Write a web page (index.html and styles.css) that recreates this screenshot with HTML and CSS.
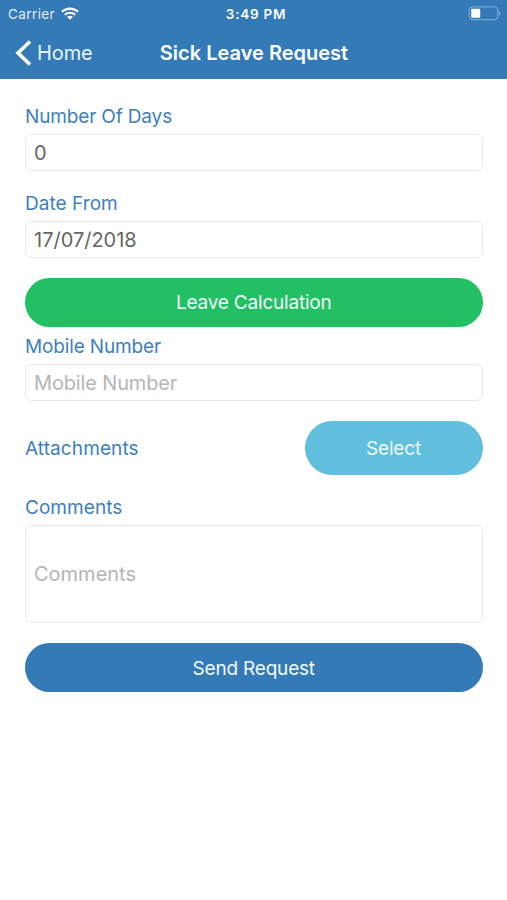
FILE: index.html
```html
<!DOCTYPE html>
<html lang="en">
<head>
<meta charset="utf-8">
<title>Sick Leave Request</title>
<link rel="stylesheet" href="styles.css">
</head>
<body>
<header class="header">
  <div class="status">
    <div class="carrier"><span>Carrier</span>
      <svg class="wifi" width="18" height="13" viewBox="0 0 18 13" fill="none" stroke="#fff" stroke-width="2.1"><path d="M1 4.8C5.5.5 12.5.5 17 4.8"/><path d="M3.8 7.7c3-2.7 7.4-2.7 10.4 0"/><path d="M6.1 9.8c1.7-1.5 4.1-1.5 5.8 0L9 12.7z" fill="#fff" stroke="none"/></svg>
    </div>
    <span class="time">3:49 PM</span>
    <svg class="battery" width="33" height="15" viewBox="0 0 33 15"><rect x="1.2" y=".9" width="28.6" height="12.8" rx="3.2" fill="none" stroke="#85b2d9" stroke-width="1"/><rect x="3.2" y="2.8" width="9" height="9" rx=".8" fill="#fff"/><path d="M31 5.2c1.8.7 1.8 3.5 0 4.2z" fill="#85b2d9"/></svg>
  </div>
  <nav class="nav">
    <a class="back"><svg width="17" height="26" viewBox="0 0 17 26" fill="none" stroke="#fff" stroke-width="3.6"><path d="M15 1.5 3 13l12 11.5"/></svg><span>Home</span></a>
    <h1 class="title">Sick Leave Request</h1>
    <span></span>
  </nav>
</header>
<main class="form">
  <label class="label days">Number Of Days</label>
  <div class="field value">0</div>
  <label class="label from">Date From</label>
  <div class="field value">17/07/2018</div>
  <button class="button calculate">Leave Calculation</button>
  <label class="label mobile">Mobile Number</label>
  <div class="field hint mobile-field">Mobile Number</div>
  <div class="attachments"><span class="label attach">Attachments</span><button class="button select">Select</button></div>
  <label class="label comments">Comments</label>
  <div class="field hint area">Comments</div>
  <button class="button send">Send Request</button>
</main>
</body>
</html>
```
FILE: styles.css
```css
* { box-sizing: border-box; }
body {
  margin: 0;
  min-height: 900px;
  background: #fff;
  font-family: Inter, "Liberation Sans", sans-serif;
  font-size: 19px;
}
.header { height: 79px; background: #337ab7; color: #fff; }
.status {
  display: grid;
  grid-template-columns: 1fr auto 1fr;
  align-items: center;
  height: 27px;
  padding: 0 6px 0 8px;
  font-size: 13.5px;
}
.carrier { display: flex; align-items: center; gap: 6px; color: #e3f0fb; letter-spacing: .4px; }
.time { font-weight: 600; letter-spacing: .75px; margin-left: 3px; }
.battery { justify-self: end; }
.nav {
  display: grid;
  grid-template-columns: 1fr auto 1fr;
  align-items: center;
  height: 51px;
}
.back { display: flex; align-items: center; gap: 5px; padding-left: 15px; font-size: 20px; letter-spacing: -.1px; color: #eaf5ff; }
.title { margin: 0 0 0 1px; font-size: 20px; font-weight: 600; letter-spacing: 0; }
.form { display: flex; flex-direction: column; padding: 26px 24.5px 0 25px; }
.label { height: 24px; margin-bottom: 5px; line-height: 24px; color: #3d80bd; letter-spacing: -.15px; white-space: nowrap; }
.field {
  display: flex;
  align-items: center;
  height: 37px;
  padding: 0 8px;
  border: 1px solid #e9e9e9;
  border-radius: 6px;
  font-size: 20px;
}
.value { color: #666; }
.hint { color: #b5b5b5; }
.from { margin-top: 21px; letter-spacing: .05px; }
.button {
  height: 49px;
  padding: 0;
  border: 0;
  border-radius: 27px;
  font: inherit;
  letter-spacing: -.2px;
  color: #f0fbff;
}
.calculate { margin-top: 20px; background: #23c063; }
.mobile { margin-top: 8px; }
.mobile-field { letter-spacing: -.15px; }
.attachments { display: flex; align-items: center; justify-content: space-between; height: 54px; margin-top: 20px; }
.attach { margin: 0; padding-top: 1px; letter-spacing: .1px; }
.select { width: 178px; height: 54px; background: #5fbfdc; }
.comments { margin-top: 21px; letter-spacing: .05px; }
.area { height: 98px; }
.send { margin-top: 20px; padding-top: 1px; background: #337ab7; }
```
